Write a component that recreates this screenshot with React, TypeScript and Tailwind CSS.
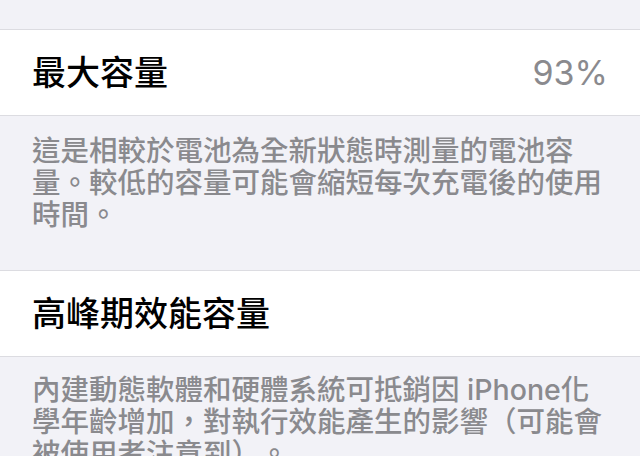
const FONT = 'font-["Inter","Noto_Sans_CJK_TC",sans-serif]';

function Row({ title, value }: { title: string; value?: string }) {
  return (
    <div className="h-[87px] bg-white border-y border-[#dcdce1] flex items-center justify-between pl-8 pr-8">
      <span className="text-[34px] font-medium text-black leading-none">{title}</span>
      {value && <span className="text-[34px] text-[#8a8a8e] leading-none">{value}</span>}
    </div>
  );
}

function Note({ children, className = '' }: { children: React.ReactNode; className?: string }) {
  return (
    <p className={`px-8 text-[28.5px] leading-[32px] font-medium text-[#8a8a8e] [text-spacing-trim:space-all] ${className}`}>
      {children}
    </p>
  );
}

export default function App() {
  return (
    <div className={`w-[640px] h-[456px] overflow-hidden bg-[#f2f2f7] ${FONT}`}>
      <div className="h-[29px]" />
      <Row title="最大容量" value="93%" />
      <Note className="pt-[19px] pb-[39px]">
        這是相較於電池為全新狀態時測量的電池容量。較低的容量可能會縮短每次充電後的使用時間。
      </Note>
      <Row title="高峰期效能容量" />
      <Note className="pt-[17px]">
        內建動態軟體和硬體系統可抵銷因 iPhone化學年齡增加，對執行效能產生的影響（可能會被使用者注意到）。
      </Note>
    </div>
  );
}
